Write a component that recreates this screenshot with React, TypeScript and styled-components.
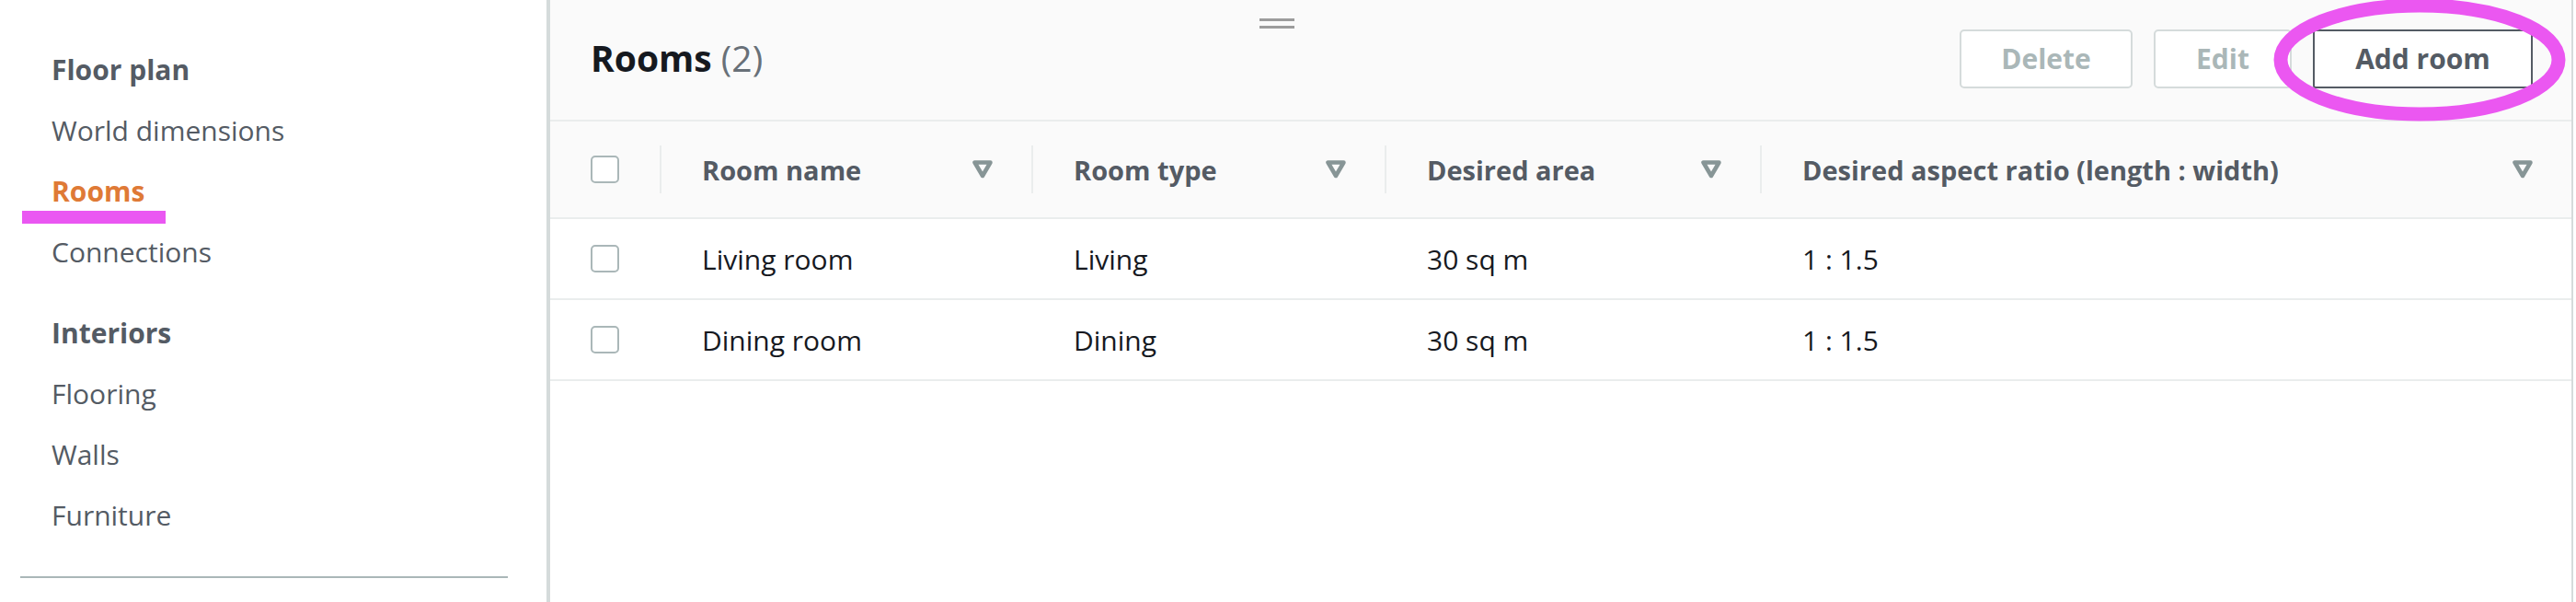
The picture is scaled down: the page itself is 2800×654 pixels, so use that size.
import React from "react";
import styled, { createGlobalStyle } from "styled-components";

type Room = {
  id: number;
  name: string;
  type: string;
  area: string;
  ratio: string;
};

const rooms: Room[] = [
  { id: 1, name: "Living room", type: "Living", area: "30 sq m", ratio: "1 : 1.5" },
  { id: 2, name: "Dining room", type: "Dining", area: "30 sq m", ratio: "1 : 1.5" },
];

const columnsHead = ["Room name", "Room type", "Desired area", "Desired aspect ratio (length : width)"];

const navSections = [
  { heading: "Floor plan", items: ["World dimensions", "Rooms", "Connections"] },
  { heading: "Interiors", items: ["Flooring", "Walls", "Furniture"] },
];

const SortIcon = () => (
  <svg width="22" height="20" viewBox="0 0 22 20">
    <path
      d="M2.5 2.5 H19.5 L11 17 Z"
      fill="none"
      stroke="#879596"
      strokeWidth="4.5"
      strokeLinejoin="round"
    />
  </svg>
);

export default function App() {
  return (
    <Page>
      <GlobalStyle />
      <Sidebar>
        {navSections.map((section) => (
          <NavSection key={section.heading}>
            <NavHeading>{section.heading}</NavHeading>
            {section.items.map((item) => (
              <NavItem key={item} $active={item === "Rooms"}>
                {item}
              </NavItem>
            ))}
          </NavSection>
        ))}
        <Divider />
        <Underline />
      </Sidebar>

      <Panel>
        <Grip>
          <span />
          <span />
        </Grip>
        <Toolbar>
          <Title>
            Rooms <Count>(2)</Count>
          </Title>
          <Actions>
            <Button disabled $width={188}>
              Delete
            </Button>
            <Button disabled $width={150}>
              Edit
            </Button>
            <Button $primary $width={239}>
              Add room
            </Button>
          </Actions>
        </Toolbar>

        <HeaderRow>
          <SelectCell>
            <Checkbox />
          </SelectCell>
          {columnsHead.map((col) => (
            <HeaderCell key={col}>
              {col}
              <SortIcon />
            </HeaderCell>
          ))}
        </HeaderRow>

        {rooms.map((room) => (
          <BodyRow key={room.id}>
            <SelectCell>
              <Checkbox />
            </SelectCell>
            <Cell>{room.name}</Cell>
            <Cell>{room.type}</Cell>
            <Cell>{room.area}</Cell>
            <Cell>{room.ratio}</Cell>
          </BodyRow>
        ))}
      </Panel>

      <Circle width="340" height="140" viewBox="0 0 340 140">
        <ellipse cx="170" cy="65" rx="151" ry="59" fill="none" stroke="#eb57f1" strokeWidth="15" />
      </Circle>
    </Page>
  );
}

const GlobalStyle = createGlobalStyle`
  * { box-sizing: border-box; }
  html, body {
    margin: 0;
    padding: 0;
    background: #ffffff;
  }
  body {
    width: 2800px;
    height: 654px;
    overflow: hidden;
    font-family: "Open Sans", "Liberation Sans", sans-serif;
  }
`;

const columns = "119px 404px 384px 408px 1fr";

const Page = styled.div`
  position: relative;
  display: flex;
  width: 2800px;
  height: 654px;
  overflow: hidden;
`;

const Sidebar = styled.nav`
  position: relative;
  flex: none;
  width: 594px;
  padding: 43px 0 0 22px;
`;

const NavSection = styled.ul`
  list-style: none;
  margin: 0;
  padding: 0 0 0 34px;

  & + & {
    margin-top: 22px;
  }
`;

const NavHeading = styled.li`
  font-size: 30px;
  line-height: 66px;
  font-weight: 700;
  color: #545b64;
`;

const NavItem = styled.li<{ $active?: boolean }>`
  font-size: 30px;
  line-height: 66px;
  font-weight: ${(p) => (p.$active ? 700 : 400)};
  color: ${(p) => (p.$active ? "#df7a36" : "#545b64")};
`;

const Divider = styled.hr`
  width: 530px;
  height: 2px;
  margin: 33px 0 0;
  border: 0;
  background: #aab7b8;
`;

const Underline = styled.div`
  position: absolute;
  left: 24px;
  top: 229px;
  width: 156px;
  height: 14px;
  background: #ea57f2;
`;

const Panel = styled.main`
  position: relative;
  flex: 1;
  min-width: 0;
  margin-right: 3px;
  border-left: 4px solid #d5dbdb;
  border-right: 2px solid #d5dbdb;
  background: #ffffff;
`;

const Grip = styled.div`
  position: absolute;
  left: 771px;
  top: 20px;
  display: flex;
  flex-direction: column;
  gap: 5px;

  span {
    display: block;
    width: 38px;
    height: 3px;
    background: #9c9c9c;
  }
`;

const Toolbar = styled.header`
  display: flex;
  align-items: center;
  justify-content: space-between;
  height: 132px;
  padding: 0 42px 3px 44px;
  background: #fafafa;
  border-bottom: 2px solid #eaeded;
`;

const Title = styled.h2`
  margin: 0;
  font-size: 39px;
  line-height: 1.2;
  font-weight: 700;
  color: #16191f;
`;

const Count = styled.span`
  font-weight: 400;
  color: #687078;
`;

const Actions = styled.div`
  display: flex;
  gap: 23px;
`;

const Button = styled.button<{ $primary?: boolean; $width: number }>`
  width: ${(p) => p.$width}px;
  height: 64px;
  padding: 0;
  font-family: inherit;
  font-size: 30px;
  font-weight: 700;
  background: #ffffff;
  border: 2px solid ${(p) => (p.$primary ? "#545b64" : "#d5dbdb")};
  border-radius: ${(p) => (p.$primary ? "3px" : "5px")};
  color: ${(p) => (p.$primary ? "#545b64" : "#aab7b8")};
`;

const HeaderRow = styled.div`
  display: grid;
  grid-template-columns: ${columns};
  height: 106px;
  background: #fafafa;
  border-bottom: 2px solid #eaeded;
`;

const BodyRow = styled.div`
  display: grid;
  grid-template-columns: ${columns};
  height: 88px;
  border-bottom: 2px solid #eaeded;
`;

const SelectCell = styled.div`
  display: flex;
  align-items: center;
  padding-left: 44px;
`;

const Checkbox = styled.span`
  display: block;
  width: 31px;
  height: 30px;
  border: 2px solid #aab7b8;
  border-radius: 5px;
  background: #ffffff;
`;

const HeaderCell = styled.div`
  position: relative;
  display: flex;
  align-items: center;
  justify-content: space-between;
  padding: 0 42px 0 46px;
  font-size: 29px;
  font-weight: 700;
  color: #545b64;
  white-space: nowrap;

  &::before {
    content: "";
    position: absolute;
    left: 0;
    top: 26px;
    bottom: 26px;
    width: 2px;
    background: #eaeded;
  }
`;

const Cell = styled.div`
  display: flex;
  align-items: center;
  padding-left: 46px;
  font-size: 30px;
  color: #16191f;
  white-space: nowrap;
`;

const Circle = styled.svg`
  position: absolute;
  left: 2460px;
  top: 0;
  pointer-events: none;
`;
